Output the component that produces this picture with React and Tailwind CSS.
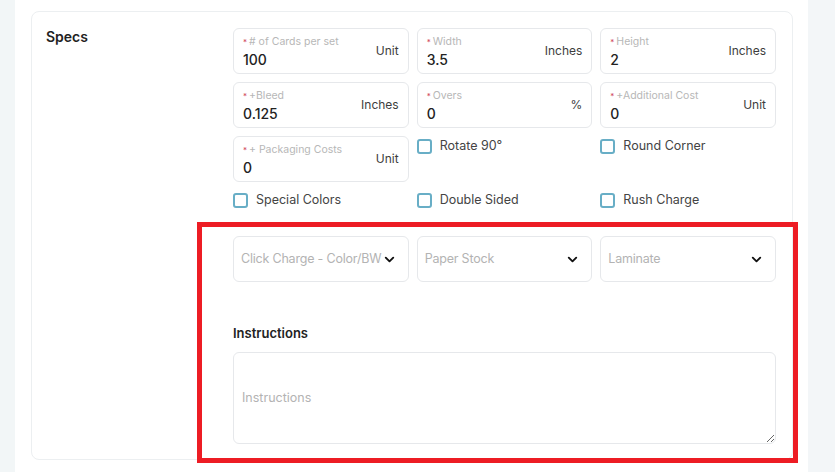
import React from "react";
import { ChevronDown } from "lucide-react";

const font = { fontFamily: "Inter, 'Noto Sans', sans-serif" };

function NumberField({ label, value, unit }) {
  return (
    <div className="h-[46px] rounded-md border border-[#e6e8eb] bg-white pl-[9px] pr-[9px] flex items-center">
      <div className="flex-1 min-w-0 flex flex-col pt-[2px]">
        <div className="flex items-center text-[10.5px] leading-[14px] text-[#b7b7b7] whitespace-nowrap">
          <span className="text-[#d0455a] text-[8px] mr-[2px]">*</span>
          <span>{label}</span>
        </div>
        <div className="text-[14px] leading-[20px] font-medium text-[#222] mt-[1px]">{value}</div>
      </div>
      <span className="text-[12px] text-[#3d3d3d] whitespace-nowrap">{unit}</span>
    </div>
  );
}

function Check({ label }) {
  return (
    <label className="flex items-center gap-[8px] h-[20px]">
      <span className="w-[15px] h-[15px] rounded-[3px] border-2 border-[#68aec6] bg-white shrink-0" />
      <span className="text-[12.5px] text-[#444]">{label}</span>
    </label>
  );
}

function SelectBox({ placeholder }) {
  return (
    <div className="h-[46px] rounded-md border border-[#e6e8eb] bg-white pl-[7px] pr-[11px] flex items-center">
      <span className="flex-1 min-w-0 overflow-hidden whitespace-nowrap text-[12.5px] tracking-[-0.2px] text-[#b3b3b3]">
        {placeholder}
      </span>
      <ChevronDown size={15} strokeWidth={3} className="text-[#111] shrink-0" />
    </div>
  );
}

export default function App() {
  return (
    <div className="relative w-[835px] h-[472px] overflow-hidden flex bg-white" style={font}>
      <div className="w-[15px] bg-[#f2f6f7]" />
      <main className="flex-1 pt-[11px] pl-[16px] pr-[15px]">
        <section className="rounded-lg border border-[#eceff1] bg-white flex pl-[14px] pr-[16px] pt-[16px] pb-[15px]">
          <div className="w-[187px] shrink-0">
            <h3 className="text-[14px] leading-[18px] font-semibold text-[#222]">Specs</h3>
          </div>
          <div className="flex-1">
            <div className="grid grid-cols-3 gap-x-2 gap-y-2">
              <NumberField label="# of Cards per set" value="100" unit="Unit" />
              <NumberField label="Width" value="3.5" unit="Inches" />
              <NumberField label="Height" value="2" unit="Inches" />
              <NumberField label="+Bleed" value="0.125" unit="Inches" />
              <NumberField label="Overs" value="0" unit="%" />
              <NumberField label="+Additional Cost" value="0" unit="Unit" />
              <NumberField label="+ Packaging Costs" value="0" unit="Unit" />
              <div>
                <Check label="Rotate 90°" />
              </div>
              <div>
                <Check label="Round Corner" />
              </div>
              <Check label="Special Colors" />
              <Check label="Double Sided" />
              <Check label="Rush Charge" />
            </div>
            <div className="grid grid-cols-3 gap-x-2 mt-[26px]">
              <SelectBox placeholder="Click Charge - Color/BW" />
              <SelectBox placeholder="Paper Stock" />
              <SelectBox placeholder="Laminate" />
            </div>
            <div className="mt-[42px] text-[13px] leading-[18px] font-semibold text-[#222]">Instructions</div>
            <textarea
              placeholder="Instructions"
              className="mt-[10px] block w-full h-[92px] rounded-md border border-[#e6e8eb] pl-[8px] pr-2 pt-[35px] text-[12.5px] leading-[20px] text-[#222] placeholder:text-[#b3b3b3] outline-none"
            />
          </div>
        </section>
      </main>
      <div className="w-[27px] bg-[#f3f6f8]" />
      <div className="absolute left-[197px] top-[222px] w-[601px] h-[241px] border-[5px] border-[#ed1c24] pointer-events-none" />
    </div>
  );
}
